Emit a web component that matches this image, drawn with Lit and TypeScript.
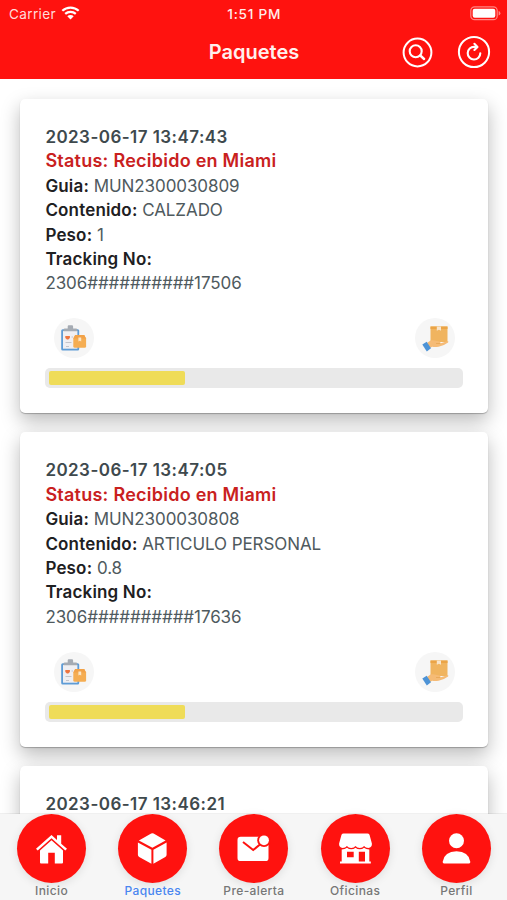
import { LitElement, html, svg, css, nothing } from "lit";
import { customElement, property } from "lit/decorators.js";

interface ParcelDetails {
  status: string;
  guide: string;
  content: string;
  weight: string;
  tracking: string;
  progress: number;
}

interface Parcel {
  date: string;
  details?: ParcelDetails;
}

const parcels: Parcel[] = [
  { date: "2023-06-17 13:47:43", details: { status: "Recibido en Miami", guide: "MUN2300030809", content: "CALZADO", weight: "1", tracking: "2306##########17506", progress: 33 } },
  { date: "2023-06-17 13:47:05", details: { status: "Recibido en Miami", guide: "MUN2300030808", content: "ARTICULO PERSONAL", weight: "0.8", tracking: "2306##########17636", progress: 33 } },
  { date: "2023-06-17 13:46:21" },
];

const clipboardIcon = svg`<svg width="40" height="40" viewBox="0 0 40 40">
  <rect x="7.200" y="11.200" width="18" height="21.300" rx="1.500" fill="#5e9cd6"/>
  <rect x="9" y="13" width="14.400" height="17.700" fill="#f0eff2"/>
  <path d="M9.500 13.300V12q0-1.400 1.400-1.400h2.800V8.600q0-1.400 1.100-1.400h3.200q1.100 0 1.100 1.400v2h2.800q1.400 0 1.400 1.400v1.300z" fill="#a5abb3"/>
  <path d="M11.300 18h4.600v2l-1.600 1.500h-1.400L11.300 20z" fill="#ee7540"/>
  <path d="M17.500 19h1.500M11.500 24.500h6M12 28.500h3" stroke="#c3c4ca" stroke-width="1"/>
  <path d="M19.300 20.500l1.900-3.500h9l1.900 3.500v7.700q0 1.600-1.500 1.600H20.800q-1.500 0-1.500-1.600z" fill="#f5ad52"/>
  <path d="M19.300 20.500l1.900-3.500h9l1.900 3.500z" fill="#f2a248"/>
  <path d="M24.400 19.500h2.800v4l-1.400-.8-1.400.8z" fill="#fbe5c6"/>
</svg>`;

const deliveryIcon = svg`<svg width="40" height="40" viewBox="0 0 40 40">
  <path d="M15.500 8.500h17v15.500h-17z" fill="#f0b45f"/>
  <path d="M15.500 8.500h17v2.500h-17z" fill="#eba446"/>
  <path d="M21.800 8.500h4.200v4.200l-2.100-1-2.100 1z" fill="#f8e5cb"/>
  <path d="M12 25l3.500-2.400q2-.8 4 0l4.800.8q2 .5.800 2l7-2.200q2-.3 1 1.400-4.500 3.500-9.500 4.100-4 .6-6.500 0L15 30z" fill="#f5bb76"/>
  <path d="M21 25.500h4.500" stroke="#e5a34f" stroke-width=".7"/>
  <path d="M7.300 26.600l4.400-2.900 4.300 6.600-4.200 3.200z" fill="#4d93d6"/>
</svg>`;

@customElement("parcel-card")
export class ParcelCard extends LitElement {
  @property({ attribute: false }) parcel!: Parcel;

  static styles = css`
    :host {
      display: block;
      box-sizing: border-box;
      height: 314.5px;
      padding: 26.3px 24.5px 0 25.2px;
      background: #fff;
      border-radius: 5px;
      box-shadow: 0 1px 1px rgba(0, 0, 0, 0.25), 0 8px 19px rgba(0, 0, 0, 0.27);
      color: #4f5a5e;
      font-size: 17px;
      line-height: 24.45px;
    }
    .line { white-space: pre; height: 24.45px; letter-spacing: -0.08px; }
    .date { font-weight: 600; color: #3e494d; letter-spacing: 0.45px; }
    .status { font-weight: 600; color: #c9211e; font-size: 18px; letter-spacing: 0.25px; }
    .label { font-weight: 600; color: #1e2022; letter-spacing: 0.17px; }
    .stages { display: flex; justify-content: space-between; padding: 0 8px 0 8.8px; margin-top: 22.2px; }
    .stage { display: block; width: 40px; height: 40px; border-radius: 50%; background: #f6f6f6; }
    .stage svg { display: block; }
    .track { box-sizing: border-box; height: 20px; margin-top: 10px; padding: 3px 4px; border-radius: 5px; background: #e9e9e9; }
    .fill { height: 14px; border-radius: 2px; background: #efdc58; }
  `;

  private renderDetails(d: ParcelDetails) {
    return html`
      <div class="line status">Status: ${d.status}</div>
      <div class="line"><span class="label">Guia:</span> ${d.guide}</div>
      <div class="line"><span class="label">Contenido:</span> ${d.content}</div>
      <div class="line"><span class="label">Peso:</span> ${d.weight}</div>
      <div class="line"><span class="label">Tracking No:</span></div>
      <div class="line">${d.tracking}</div>
      <div class="stages">
        <span class="stage">${clipboardIcon}</span>
        <span class="stage">${deliveryIcon}</span>
      </div>
      <div class="track"><div class="fill" style="width:${d.progress}%"></div></div>
    `;
  }

  render() {
    const p = this.parcel;
    return html`
      <div class="line date">${p.date}</div>
      ${p.details ? this.renderDetails(p.details) : nothing}
    `;
  }
}

const tabs = [
  {
    label: "Inicio",
    icon: svg`<path d="M19 34.800L34.500 21l5.500 4.900V21.200h4.200v8.500L50 34.800l-1.700 1.700L34.500 24.200 20.700 36.500z" fill="#fff"/>
      <path d="M34.500 26.300L46 36.500V48.500q0 1-1 1h-7.200V38.800h-6.600V49.500H24q-1 0-1-1V36.500z" fill="#fff"/>`,
  },
  {
    label: "Paquetes",
    icon: svg`<path d="M20.900 26.500L33.200 19.500q1.200-.7 2.400 0L47.600 26.500 34.400 33.700z" fill="#fff"/>
      <path d="M19.900 28.400L33.400 35.800V49.700L21.200 43q-1.300-.8-1.300-2.200zM48.600 28.400L35.400 35.800V49.700L47.300 43q1.300-.8 1.300-2.200z" fill="#fff"/>`,
  },
  {
    label: "Pre-alerta",
    icon: svg`<rect x="18.500" y="22.800" width="31" height="24.300" rx="3.200" fill="#fff"/>
      <path d="M24 28l10.200 8 8-6.500" fill="none" stroke="#ff120f" stroke-width="2"/>
      <circle cx="45" cy="26.300" r="6.800" fill="#ff120f"/><circle cx="45" cy="26.300" r="4.900" fill="#fff"/>`,
  },
  {
    label: "Oficinas",
    icon: svg`<path d="M22.500 19.600h24q1.300 0 2 1.200l2.400 8.700q.4 4-3.600 4.400-2.700 0-4.200-2-1.500 2-4.300 2t-4.300-2q-1.500 2-4.300 2t-4.300-2q-1.500 2-4.200 2-4-.4-3.600-4.400l2.400-8.700q.7-1.200 2-1.200z" fill="#fff"/>
      <path fill-rule="evenodd" d="M20.700 35.400q3.300 0 5.300-1.700 1.700 1.600 4.200 1.600t4.300-1.600q1.700 1.600 4.300 1.600t4.200-1.600q2 1.700 5.300 1.700V47.600h1.500v2H19v-2h1.700zM26 37.700v5.600h6.700v-5.600zM37.800 37.700v9.900H44v-9.900z" fill="#fff"/>`,
  },
  {
    label: "Perfil",
    icon: svg`<circle cx="34.500" cy="26.800" r="7.500" fill="#fff"/>
      <path d="M22 49.500q-1.500 0-1.300-1.700Q22.400 37.300 34.500 37.300T48.300 47.800q.2 1.700-1.300 1.700z" fill="#fff"/>`,
  },
];

@customElement("app-root")
export class AppRoot extends LitElement {
  static styles = css`
    :host {
      display: flex;
      flex-direction: column;
      height: 900px;
      overflow: hidden;
      background: #fff;
      font-family: Inter, "Liberation Sans", sans-serif;
    }
    header { flex: none; height: 79px; background: #ff120f; color: #fff; }
    .statusbar { display: grid; grid-template-columns: 1fr auto 1fr; align-items: center; height: 28px; padding: 0 6px 0 9px; font-size: 13.6px; }
    .carrier { display: flex; align-items: center; gap: 5px; color: #ffdcda; letter-spacing: 0.35px; }
    .clock { font-weight: 500; color: #ffecea; letter-spacing: 0.75px; margin-right: 1.5px; }
    .battery { justify-self: end; display: block; margin-top: -2px; }
    .titlebar { display: grid; grid-template-columns: 1fr auto 1fr; align-items: center; height: 48px; padding: 0 16px 0 17px; }
    h1 { grid-column: 2; margin: 0; font-size: 20px; line-height: 24px; font-weight: 600; color: #ffefed; }
    .actions { display: flex; align-items: center; justify-content: flex-end; gap: 24px; }
    .actions svg { display: block; }
    .carrier svg { display: block; margin-top: -2px; }
    main { flex: 1; min-height: 0; overflow: hidden; display: flex; flex-direction: column; gap: 19px; padding: 19.500px 19.500px 0 20.200px; }
    parcel-card { flex: none; }
    nav { flex: none; box-sizing: border-box; height: 86px; padding-left: 1px; display: grid; grid-template-columns: repeat(5, 101.200px); background: #f6f6f6; box-shadow: 0 -1px 0 rgba(0, 0, 0, 0.06); z-index: 1; }
    .tab { display: flex; flex-direction: column; align-items: center; font-size: 12px; line-height: 16px; font-weight: 500; letter-spacing: 0.38px; color: #777; }
    .active { color: #4a86f0; }
    .disc { display: block; width: 69px; height: 69px; border-radius: 50%; background: #ff120f; box-shadow: 0 2px 10px rgba(0, 0, 0, 0.1); }
    .disc svg { display: block; }
  `;

  render() {
    return html`
      <header>
        <div class="statusbar">
          <span class="carrier">Carrier
            <svg width="19" height="14" viewBox="0 0 19 14">
              <path d="M1.300 4.800a12 12 0 0 1 16.400 0M4.200 7.900a7.800 7.800 0 0 1 10.600 0" fill="none" stroke="#fff" stroke-width="2.200"/>
              <path d="M9.500 13.500L6.300 10.300a4.600 4.600 0 0 1 6.400 0z" fill="#fff"/>
            </svg>
          </span>
          <span class="clock">1:51 PM</span>
          <svg class="battery" width="31" height="15" viewBox="0 0 31 15">
            <rect x=".8" y=".8" width="26.400" height="12.900" rx="3.800" fill="none" stroke="#ff8583" stroke-width="1.200"/>
            <rect x="2.700" y="2.700" width="22.600" height="9.100" rx="2" fill="#fff"/>
            <path d="M28.600 5q1.800.6 1.800 2.300t-1.800 2.300z" fill="#ff8583"/>
          </svg>
        </div>
        <div class="titlebar">
          <h1>Paquetes</h1>
          <div class="actions">
            <svg width="31" height="31" viewBox="0 0 31 31" fill="none" stroke="#fff">
              <circle cx="15.500" cy="15.500" r="13.900" stroke-width="2"/>
              <circle cx="13.700" cy="14.200" r="6" stroke-width="2.100"/>
              <path d="M18.300 18.500l3.800 3.500" stroke-width="2.400" stroke-linecap="round"/>
            </svg>
            <svg width="34" height="34" viewBox="0 0 34 34" fill="none" stroke="#fff" stroke-width="2">
              <circle cx="17" cy="17" r="15.100"/>
              <path d="M19.500 11.900H17.300A6.300 6.300 0 1 0 23.300 18.200" stroke-width="2.100" stroke-linecap="round"/>
              <path d="M17.400 8.800l3.100 3.100-3.100 3.100" stroke-width="2.100" stroke-linecap="round" stroke-linejoin="round"/>
            </svg>
          </div>
        </div>
      </header>
      <main>${parcels.map((p) => html`<parcel-card .parcel=${p}></parcel-card>`)}</main>
      <nav>
        ${tabs.map((t) => html`
          <div class="tab ${t.label === "Paquetes" ? "active" : ""}">
            <span class="disc"><svg width="69" height="69" viewBox="0 0 69 69">${t.icon}</svg></span>
            <span>${t.label}</span>
          </div>`)}
      </nav>
    `;
  }
}
